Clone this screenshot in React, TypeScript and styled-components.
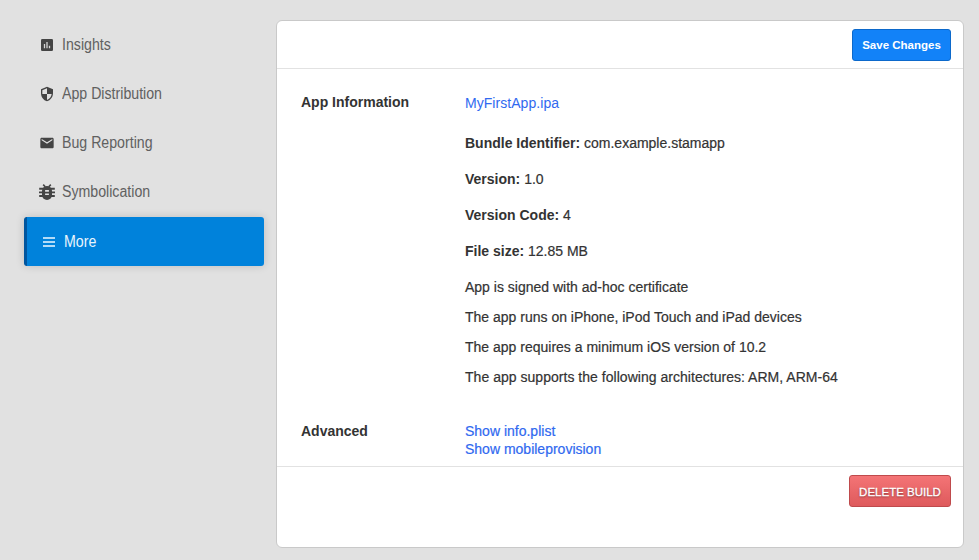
import React from "react";
import styled, { createGlobalStyle } from "styled-components";
import { MdSecurity, MdEmail } from "react-icons/md";

const GlobalStyle = createGlobalStyle`
  * { box-sizing: border-box; }
  body { margin: 0; background: #e1e1e1; }
  body, button { font-family: "Liberation Sans", Arial, sans-serif; }
`;

const Page = styled.div`
  display: flex;
  height: 560px;
  padding: 20px 15px 12px 24px;
  gap: 12px;
`;

const Sidebar = styled.nav`
  width: 240px;
  display: flex;
  flex-direction: column;
`;

const NavItem = styled.a<{ $active?: boolean }>`
  display: flex;
  align-items: center;
  height: 49px;
  margin-top: ${(p) => (p.$active ? 1 : 0)}px;
  padding-left: ${(p) => (p.$active ? 12 : 13)}px;
  border-left: ${(p) => (p.$active ? "3px solid #00569f" : "0")};
  border-radius: 3px;
  color: ${(p) => (p.$active ? "#eaf5fd" : "#606060")};
  background: ${(p) => (p.$active ? "#0082db" : "transparent")};
  box-shadow: ${(p) => (p.$active ? "0 0 8px rgba(0, 0, 0, 0.16)" : "none")};
`;

const IconSlot = styled.span<{ $active?: boolean }>`
  display: flex;
  align-items: center;
  justify-content: center;
  width: 20px;
  margin-right: 5px;
  color: ${(p) => (p.$active ? "#b3dbf7" : "#444")};
  svg { flex: none; }
`;

const NavLabel = styled.span`
  font-size: 16px;
  line-height: 20px;
  transform: scaleX(0.885);
  transform-origin: left center;
`;

const Panel = styled.main`
  width: 688px;
  height: 528px;
  display: flex;
  flex-direction: column;
  background: #fff;
  border: 1px solid #c9c9c9;
  border-radius: 6px;
`;

const Toolbar = styled.header`
  display: flex;
  justify-content: flex-end;
  height: 48px;
  padding: 8px 12px 0;
  border-bottom: 1px solid #e2e2e2;
`;

const Footer = styled.footer`
  display: flex;
  justify-content: flex-end;
  padding: 8px 12px 0;
`;

const SaveButton = styled.button`
  width: 99px;
  height: 32px;
  padding: 0;
  border: 1px solid #0c69cb;
  border-radius: 3px;
  background: #1282f8;
  color: #fff;
  font-size: 11.5px;
  font-weight: 700;
`;

const DeleteButton = styled.button`
  width: 102px;
  height: 32px;
  padding: 2px 0 0;
  border: 1px solid #bf4a4c;
  border-radius: 3px;
  background: linear-gradient(#f47476, #de5a5c);
  color: #fff;
  font-size: 11.5px;
  -webkit-text-stroke: 0.3px #fff;
  text-shadow: 0 1px 2px rgba(0, 0, 0, 0.5);
`;

const Content = styled.div`
  height: 398px;
  padding: 24px 24px 0;
  border-bottom: 1px solid #e2e2e2;
  color: #333;
  font-size: 14px;
  line-height: 18px;
`;

const Section = styled.section`
  display: grid;
  grid-template-columns: 164px 1fr;
`;

const Heading = styled.h2`
  margin: 0;
  font-size: 14px;
  line-height: 18px;
`;

const Body = styled.div`
  display: flex;
  flex-direction: column;
  align-items: flex-start;
  -webkit-text-stroke: 0.2px currentColor;
  b { -webkit-text-stroke: 0; }
`;

const FileLink = styled.a`
  color: #3069f0;
  line-height: 20px;
  margin-bottom: 21px;
  letter-spacing: 0.05px;
  -webkit-text-stroke: 0;
`;

const Detail = styled.p`
  margin: 0 0 18px;
`;

const Note = styled.p<{ $last?: boolean }>`
  margin: 0 0 ${(p) => (p.$last ? 36 : 12)}px;
  letter-spacing: ${(p) => (p.$last ? 0.03 : 0)}px;
`;

const TextLink = styled.a`
  color: #3069f0;
`;

const InsightsIcon = () => (
  <svg width="12" height="12" viewBox="0 0 12 12">
    <rect width="12" height="12" rx="1.3" fill="currentColor" />
    <path d="M3.5 5v4.3M6 3v6.3M8.5 6.7v2.6" stroke="#d6d6d6" strokeWidth="1.3" />
  </svg>
);

const BugIcon = () => (
  <svg width="16" height="16" viewBox="0 0 16 16" fill="none" stroke="currentColor">
    <path d="M4.2 0.6 6.2 2.8M11.8 0.6 9.8 2.8" strokeWidth="1.6" />
    <path d="M0.2 4.8h15.6M0 8.4h16M0.2 12h15.6" strokeWidth="1.9" />
    <rect x="3" y="2" width="10" height="14" rx="5" fill="currentColor" stroke="none" />
    <path d="M6.1 6.9h3.8M6.1 10.3h3.8" stroke="#e1e1e1" strokeWidth="1.6" />
  </svg>
);

const MenuIcon = () => (
  <svg width="12" height="10" viewBox="0 0 12 10" fill="currentColor">
    <path d="M0 0.1h12v1.9H0zM0 4.05h12v1.9H0zM0 8h12v1.9H0z" />
  </svg>
);

const nav = [
  { label: "Insights", icon: <InsightsIcon /> },
  { label: "App Distribution", icon: <MdSecurity size={16} /> },
  { label: "Bug Reporting", icon: <MdEmail size={16} /> },
  { label: "Symbolication", icon: <BugIcon /> },
  { label: "More", icon: <MenuIcon />, active: true },
];

const details = [
  ["Bundle Identifier:", "com.example.stamapp"],
  ["Version:", "1.0"],
  ["Version Code:", "4"],
  ["File size:", "12.85 MB"],
];

const notes = [
  "App is signed with ad-hoc certificate",
  "The app runs on iPhone, iPod Touch and iPad devices",
  "The app requires a minimum iOS version of 10.2",
  "The app supports the following architectures: ARM, ARM-64",
];

export default function App() {
  return (
    <>
      <GlobalStyle />
      <Page>
        <Sidebar>
          {nav.map((item) => (
            <NavItem key={item.label} $active={item.active}>
              <IconSlot $active={item.active}>{item.icon}</IconSlot>
              <NavLabel>{item.label}</NavLabel>
            </NavItem>
          ))}
        </Sidebar>
        <Panel>
          <Toolbar>
            <SaveButton>Save Changes</SaveButton>
          </Toolbar>
          <Content>
            <Section>
              <Heading>App Information</Heading>
              <Body>
                <FileLink>MyFirstApp.ipa</FileLink>
                {details.map(([name, value]) => (
                  <Detail key={name}>
                    <b>{name}</b> {value}
                  </Detail>
                ))}
                {notes.map((note, i) => (
                  <Note key={note} $last={i === notes.length - 1}>
                    {note}
                  </Note>
                ))}
              </Body>
            </Section>
            <Section>
              <Heading>Advanced</Heading>
              <Body>
                <TextLink>Show info.plist</TextLink>
                <TextLink>Show mobileprovision</TextLink>
              </Body>
            </Section>
          </Content>
          <Footer>
            <DeleteButton>DELETE BUILD</DeleteButton>
          </Footer>
        </Panel>
      </Page>
    </>
  );
}
